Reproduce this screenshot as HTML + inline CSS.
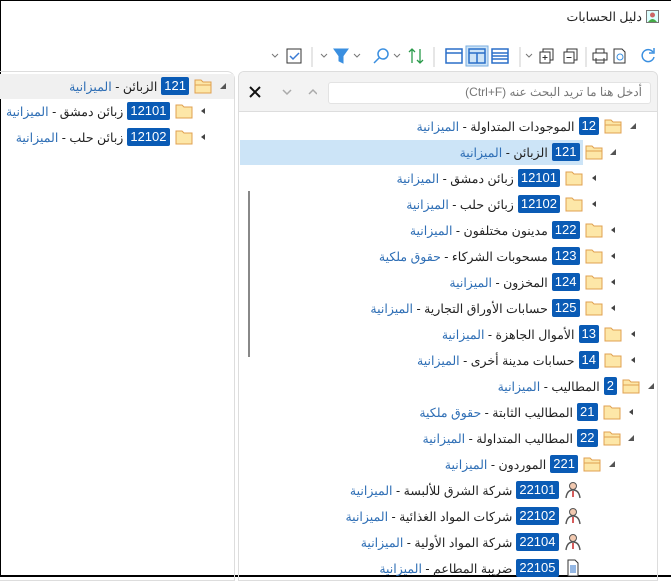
<!DOCTYPE html>
<html><head><meta charset="utf-8"><style>
*{margin:0;padding:0;box-sizing:border-box}
body{width:671px;height:577px;overflow:hidden;background:#fff;font-family:"Segoe UI","Liberation Sans","Noto Sans CJK SC",sans-serif;font-size:12.5px;color:#222;position:relative}
.win{position:absolute;left:0;top:0;width:671px;height:577px;border-top:1px solid #000;border-left:1px solid #000;border-bottom:2px solid #000}
.title{position:absolute;right:12px;top:9px;direction:rtl;display:flex;align-items:center;gap:4px;font-size:12.5px}
.row{position:absolute;height:24px;display:flex;flex-direction:row-reverse;align-items:center;white-space:nowrap}
.tri{width:9px;display:flex;justify-content:center;margin-left:6px}
.badge{background:#0a5bb5;color:#fff;border-radius:2px;padding:0 3px;height:18px;line-height:18px;font-size:13px;margin:0 5px 0 4px;direction:ltr}
.txt{direction:rtl}
.blue{color:#2e6eb5}
.lp{position:absolute;left:-4px;top:71px;width:239px;height:510px;border:1px solid #ddd;border-radius:0 8px 0 0}
.rp{position:absolute;left:238px;top:71px;width:420px;height:510px;border:1px solid #ddd;border-radius:6px 6px 0 0;overflow:hidden}
.sbar{position:absolute;left:0;top:0;width:100%;height:40px;background:#f3f3f3;border-bottom:1px solid #ddd}
.search{position:absolute;left:89px;top:10px;width:323px;height:22px;background:#fff;border:1px solid #e3e3e3;border-radius:3px;color:#777;font-size:12px;direction:rtl;padding:2px 8px}
</style></head><body>
<div class="win"></div>
<div class="title"><svg width="13" height="13"><rect x="0.5" y="0.5" width="12" height="12" fill="#dff" stroke="#777"/><circle cx="6.5" cy="5" r="2.5" fill="#c66"/><path d="M2 12 Q6.5 6 11 12Z" fill="#4a4"/></svg><span>دليل الحسابات</span></div>

<svg style="position:absolute;left:268px;top:44px" width="400" height="26">
<g fill="none" stroke="#777" stroke-width="1">
<path d="M4 10l3 3 3-3"/><rect x="19" y="5" width="14" height="14" stroke="#333"/>
<path d="M22 12l3 3 6-6" stroke="#3a7bd5" stroke-width="1.5"/>
<path d="M44 3v20" stroke="#ccc"/>
<path d="M53 10l3 3 3-3"/>
<path d="M66 5h14l-5 7v7l-4 -2v-5z" fill="#3a8fe0" stroke="#3a8fe0"/>
<path d="M86 10l3 3 3-3"/>
<circle cx="115" cy="10" r="5" stroke="#3a8fe0" stroke-width="1.5"/><path d="M111 14l-5 5" stroke="#3a8fe0" stroke-width="1.5"/>
<path d="M126 10l3 3 3-3"/>
<path d="M144 5v14M141 8l3-3 3 3M152 5v14M149 16l3 3 3-3" stroke="#2a9a4a" stroke-width="1.3"/>
<path d="M166 3v20" stroke="#ccc"/>
<rect x="178" y="5" width="16" height="14" stroke="#2a6fc9" stroke-width="1.5"/><path d="M178 9h16" stroke="#2a6fc9" stroke-width="1.5"/>
<rect x="198" y="2" width="22" height="20" fill="#cde4f7" stroke="#7aaee0"/>
<rect x="201" y="5" width="16" height="14" stroke="#2a6fc9" stroke-width="1.5"/><path d="M201 9h16M209 9v10" stroke="#2a6fc9" stroke-width="1.5"/>
<rect x="224" y="5" width="16" height="14" stroke="#2a6fc9" stroke-width="1.5"/><path d="M224 9h16M224 12h16M224 15h16" stroke="#2a6fc9" stroke-width="1.5"/>
<path d="M252 3v20" stroke="#ccc"/>
<path d="M258 10l3 3 3-3"/>
<rect x="272" y="8" width="10" height="11" stroke="#333"/><path d="M275 8V5h10v11h-3M277 11v5M274.5 13.5h5" stroke="#333"/>
<rect x="296" y="8" width="10" height="11" stroke="#333"/><path d="M299 8V5h10v11h-3M298.5 13.5h5" stroke="#333"/>
<path d="M318 3v20" stroke="#ccc"/>
<rect x="325" y="9" width="14" height="7" stroke="#333"/><path d="M328 9V5h8v4M328 14v5h8v-5" stroke="#333"/>
<path d="M346 5h8l3 3v11h-11z" stroke="#333"/><circle cx="352" cy="13" r="3" stroke="#3a8fe0"/>
<path d="M385 8a6 6 0 1 0 1 5" stroke="#3a8fe0" stroke-width="1.5"/><path d="M386 4v5h-5" stroke="#3a8fe0" stroke-width="1.5"/>
</g></svg>

<div class="lp">
<div style="position:absolute;left:0;top:2px;width:237px;height:25px;background:#f0f0f0"></div>
</div>
<div class="rp">
<div class="sbar">
<svg style="position:absolute;left:8px;top:12px" width="70" height="16"><path d="M3 3l10 10M13 3L3 13" stroke="#111" stroke-width="2"/><path d="M36 6l4 4 4-4M62 10l4-4 4 4" stroke="#aaa" stroke-width="1.5" fill="none"/></svg>
<div class="search">أدخل هنا ما تريد البحث عنه (Ctrl+F)</div>
</div>
<div style="position:absolute;left:1px;top:68px;width:343px;height:25px;background:#cce4f7"></div>
<div style="position:absolute;left:9px;top:119px;width:2px;height:166px;background:#888"></div>
</div>

<svg width="0" height="0" style="position:absolute"><defs>
<g id="fo"><path d="M1 3h6l2 2h8v11H1z" fill="#fde7a8" stroke="#e0a050"/><path d="M1 8h16" stroke="#e0a050"/></g>
<g id="fc"><path d="M1 3h6l2 2h8v11H1z" fill="#fde7a8" stroke="#e0a050"/></g>
<g id="pe"><circle cx="9" cy="5" r="3.5" fill="#f2c9b0" stroke="#555"/><path d="M2 17q1-8 7-8t7 8" fill="none" stroke="#555" stroke-width="1.4"/><path d="M9 10v6" stroke="#c33" stroke-width="1.6"/></g>
<g id="dc"><path d="M4 1h7l3 3v13H4z" fill="#fff" stroke="#333"/><path d="M6 7h6M6 9h6M6 11h6M6 13h6" stroke="#2a6fc9"/></g>
</defs></svg>

<div id="rows"></div>
<script>
const D=[
[86,444,0,'e','fo','121','الزبائن'],
[111,444,1,'c','fc','12101','زبائن دمشق'],
[137,444,1,'c','fc','12102','زبائن حلب'],
[126,34,0,'e','fo','12','الموجودات المتداولة'],
[152,34,1,'e','fo','121','الزبائن'],
[178,34,2,'c','fc','12101','زبائن دمشق'],
[204,34,2,'c','fc','12102','زبائن حلب'],
[230,34,1,'c','fc','122','مدينون مختلفون'],
[256,34,1,'c','fc','123','مسحوبات الشركاء','حقوق ملكية'],
[282,34,1,'c','fc','124','المخزون '],
[308,34,1,'c','fc','125','حسابات الأوراق التجارية'],
[334,34,0,'c','fc','13','الأموال الجاهزة'],
[360,34,0,'c','fc','14','حسابات مدينة أخرى'],
[386,16,0,'e','fo','2','المطاليب'],
[412,16,1,'c','fc','21','المطاليب الثابتة','حقوق ملكية'],
[438,16,1,'e','fo','22','المطاليب المتداولة'],
[464,16,2,'e','fo','221','الموردون'],
[490,16,3,'n','pe','22101','شركة الشرق للألبسة'],
[516,16,3,'n','pe','22102','شركات المواد الغذائية'],
[542,16,3,'n','pe','22104','شركة المواد الأولية'],
[568,16,3,'n','dc','22105','ضريبة المطاعم'],
];
let h='';
for(const [y,base,l,t,ic,n,tx,b] of D){
 const r=base+l*19.5;
 let tri='';
 if(t=='e')tri='<svg width="8" height="8"><path d="M7 1v6H1z" fill="#555"/></svg>';
 else if(t=='c')tri='<svg width="8" height="8"><path d="M6 1v6L2 4z" fill="#444"/></svg>';
 h+=`<div class="row" style="top:${y-12}px;right:${r}px"><span class="tri">${tri}</span><svg width="18" height="18"><use href="#${ic}"/></svg><span class="badge">${n}</span><span class="txt">${tx} - <span class="blue">${b||'الميزانية'}</span></span></div>`;
}
document.getElementById('rows').innerHTML=h;
</script>
</body></html>
